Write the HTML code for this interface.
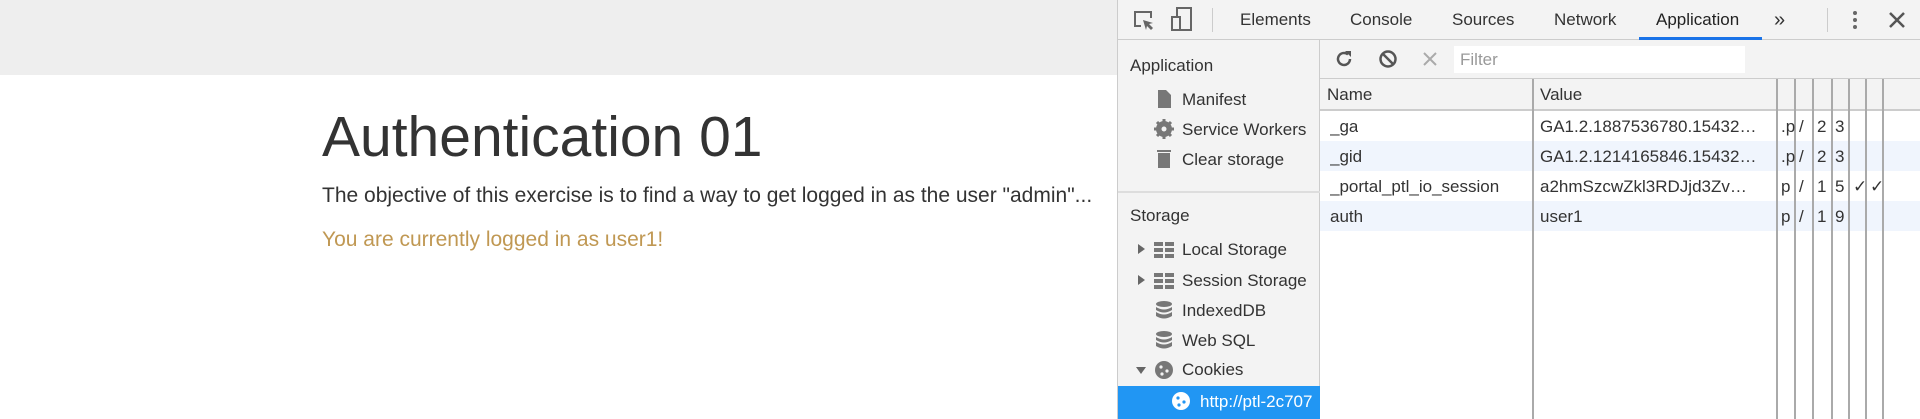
<!DOCTYPE html>
<html><head><style>
*{margin:0;padding:0;box-sizing:border-box}
body{width:1920px;height:419px;overflow:hidden;font-family:"Liberation Sans",sans-serif;background:#fff;position:relative}
.abs{position:absolute;white-space:nowrap}
#topbar{left:0;top:0;width:1117px;height:75px;background:#eeeeee}
h1{position:absolute;left:322px;top:104px;font-size:57px;font-weight:normal;color:#333;line-height:66px}
#dt{left:1117px;top:0;width:803px;height:419px;background:#fff;border-left:1px solid #ccc}
#tabs{left:0;top:0;width:803px;height:40px;background:#f3f3f3;border-bottom:1px solid #ccc;font-size:17px;color:#333}
#side{left:0;top:40px;width:202px;height:379px;background:#f3f3f3;border-right:1px solid #ccc;font-size:17px;color:#333}
.si{position:absolute;left:64px}
.ic{position:absolute;left:36px;width:20px;height:20px}
#tb{left:202px;top:40px;width:601px;height:39px;background:#f3f3f3;border-bottom:1px solid #ccc}
.cell{position:absolute;font-size:17px;color:#333;white-space:nowrap;overflow:hidden}
.vl{position:absolute;top:79px;width:2px;height:340px;background:#aaa}
</style></head><body>
<div class="abs" id="topbar"></div>
<h1>Authentication 01</h1>
<div class="abs" style="left:322px;top:184px;font-size:21px;color:#333">The objective of this exercise is to find a way to get logged in as the user "admin"...</div>
<div class="abs" style="left:322px;top:228px;font-size:21px;color:#c09853">You are currently logged in as user1!</div>

<div class="abs" id="dt">
 <div class="abs" id="tabs">
  <svg class="abs" style="left:14px;top:9px" width="24" height="24" viewBox="0 0 24 24"><path d="M9 17H3V3h16v6" fill="none" stroke="#666" stroke-width="2"/><path d="M11 11l10 3-4 1 4 4-2 2-4-4-1 4z" fill="#666"/></svg>
  <svg class="abs" style="left:52px;top:7px" width="24" height="26" viewBox="0 0 24 26"><rect x="7" y="1" width="14" height="22" fill="none" stroke="#666" stroke-width="2"/><rect x="2" y="10" width="8" height="13" fill="#f3f3f3" stroke="#666" stroke-width="2"/></svg>
  <div class="abs" style="left:94px;top:8px;width:1px;height:24px;background:#ccc"></div>
  <div class="abs" style="left:122px;top:10px">Elements</div>
  <div class="abs" style="left:232px;top:10px">Console</div>
  <div class="abs" style="left:334px;top:10px">Sources</div>
  <div class="abs" style="left:436px;top:10px">Network</div>
  <div class="abs" style="left:538px;top:10px;color:#222">Application</div>
  <div class="abs" style="left:521px;top:37px;width:123px;height:3px;background:#1a73e8"></div>
  <div class="abs" style="left:656px;top:9px;font-size:20px">»</div>
  <div class="abs" style="left:709px;top:8px;width:1px;height:24px;background:#ccc"></div>
  <svg class="abs" style="left:732px;top:9px" width="10" height="22"><circle cx="5" cy="4" r="2" fill="#666"/><circle cx="5" cy="11" r="2" fill="#666"/><circle cx="5" cy="18" r="2" fill="#666"/></svg>
  <svg class="abs" style="left:770px;top:11px" width="18" height="18"><path d="M2 2L16 16M16 2L2 16" stroke="#555" stroke-width="2.5"/></svg>
 </div>
 <div class="abs" id="side">
  <div class="abs" style="left:12px;top:16px">Application</div>
  <svg class="ic" style="top:49px" viewBox="0 0 20 20"><path d="M4 1h8l5 5v13H4z" fill="#777"/></svg><div class="si" style="top:50px">Manifest</div>
  <svg class="ic" style="top:79px" viewBox="0 0 20 20"><circle cx="10" cy="10" r="6" fill="none" stroke="#777" stroke-width="4"/><path d="M10 0v20M0 10h20M3 3l14 14M17 3L3 17" stroke="#777" stroke-width="3"/><circle cx="10" cy="10" r="2.5" fill="#f3f3f3"/></svg><div class="si" style="top:80px">Service Workers</div>
  <svg class="ic" style="top:109px" viewBox="0 0 20 20"><rect x="4" y="4" width="12" height="15" fill="#777"/><rect x="3" y="1" width="14" height="2" fill="#777"/></svg><div class="si" style="top:110px">Clear storage</div>
  <div class="abs" style="left:0;top:151px;width:202px;height:2px;background:#ddd"></div>
  <div class="abs" style="left:12px;top:166px">Storage</div>
  <div class="abs" style="left:20px;top:204px;width:0;height:0;border-left:7px solid #666;border-top:5px solid transparent;border-bottom:5px solid transparent"></div>
  <svg class="ic" style="top:200px" viewBox="0 0 20 20"><path d="M0 2h9v4H0zM11 2h9v4h-9zM0 8h9v4H0zM11 8h9v4h-9zM0 14h9v4H0zM11 14h9v4h-9z" fill="#777"/></svg><div class="si" style="top:200px">Local Storage</div>
  <div class="abs" style="left:20px;top:235px;width:0;height:0;border-left:7px solid #666;border-top:5px solid transparent;border-bottom:5px solid transparent"></div>
  <svg class="ic" style="top:231px" viewBox="0 0 20 20"><path d="M0 2h9v4H0zM11 2h9v4h-9zM0 8h9v4H0zM11 8h9v4h-9zM0 14h9v4H0zM11 14h9v4h-9z" fill="#777"/></svg><div class="si" style="top:231px">Session Storage</div>
  <svg class="ic" style="top:260px" viewBox="0 0 20 20"><ellipse cx="10" cy="4" rx="8" ry="3" fill="#777"/><path d="M2 7q8 5 16 0v3q-8 5-16 0zM2 12q8 5 16 0v4q-8 5-16 0z" fill="#777"/></svg><div class="si" style="top:261px">IndexedDB</div>
  <svg class="ic" style="top:290px" viewBox="0 0 20 20"><ellipse cx="10" cy="4" rx="8" ry="3" fill="#777"/><path d="M2 7q8 5 16 0v3q-8 5-16 0zM2 12q8 5 16 0v4q-8 5-16 0z" fill="#777"/></svg><div class="si" style="top:291px">Web SQL</div>
  <div class="abs" style="left:18px;top:327px;width:0;height:0;border-top:7px solid #666;border-left:5px solid transparent;border-right:5px solid transparent"></div>
  <svg class="ic" style="top:320px" viewBox="0 0 20 20"><circle cx="10" cy="10" r="9" fill="#777"/><circle cx="7" cy="7" r="1.6" fill="#f3f3f3"/><circle cx="13" cy="11" r="1.6" fill="#f3f3f3"/><circle cx="8" cy="14" r="1.6" fill="#f3f3f3"/></svg><div class="si" style="top:320px">Cookies</div>
  <div class="abs" style="left:0;top:346px;width:202px;height:33px;background:#2196f3"></div>
  <svg class="ic" style="left:53px;top:351px" viewBox="0 0 20 20"><circle cx="10" cy="10" r="9" fill="#fff"/><circle cx="7" cy="7" r="1.6" fill="#2196f3"/><circle cx="13" cy="11" r="1.6" fill="#2196f3"/><circle cx="8" cy="14" r="1.6" fill="#2196f3"/></svg>
  <div class="abs" style="left:82px;top:352px;color:#fff">http://ptl-2c707</div>
 </div>
 <div class="abs" id="tb">
  <svg class="abs" style="left:14px;top:9px" width="20" height="20" viewBox="0 0 20 20"><path d="M16 10a6 6 0 1 1-2-4.5" fill="none" stroke="#555" stroke-width="2.5"/><path d="M11 2h6v6z" fill="#555"/></svg>
  <svg class="abs" style="left:58px;top:9px" width="20" height="20" viewBox="0 0 20 20"><circle cx="10" cy="10" r="7.5" fill="none" stroke="#555" stroke-width="2.5"/><path d="M5 5l10 10" stroke="#555" stroke-width="2.5"/></svg>
  <svg class="abs" style="left:102px;top:11px" width="16" height="16"><path d="M2 2L14 14M14 2L2 14" stroke="#aaa" stroke-width="2"/></svg>
  <div class="abs" style="left:134px;top:6px;width:291px;height:27px;background:#fff;color:#999;font-size:17px;padding:4px 6px">Filter</div>
 </div>
 <div class="abs" style="left:202px;top:79px;width:601px;height:32px;background:#f3f3f3;border-bottom:2px solid #ccc"></div>
 <div class="abs" style="left:202px;top:141px;width:601px;height:30px;background:#f0f5fd"></div>
 <div class="abs" style="left:202px;top:201px;width:601px;height:30px;background:#f0f5fd"></div>
 <div class="vl" style="left:414px"></div><div class="vl" style="left:658px"></div>
 <div class="vl" style="left:676px"></div><div class="vl" style="left:694px"></div><div class="vl" style="left:713px"></div>
 <div class="vl" style="left:730px"></div><div class="vl" style="left:747px"></div><div class="vl" style="left:764px"></div>
 <div class="cell" style="left:209px;top:85px">Name</div>
 <div class="cell" style="left:422px;top:85px">Value</div>
 <div class="cell" style="left:212px;top:117px">_ga</div>
 <div class="cell" style="left:422px;top:117px">GA1.2.1887536780.15432…</div>
 <div class="cell" style="left:212px;top:147px">_gid</div>
 <div class="cell" style="left:422px;top:147px">GA1.2.1214165846.15432…</div>
 <div class="cell" style="left:212px;top:177px">_portal_ptl_io_session</div>
 <div class="cell" style="left:422px;top:177px">a2hmSzcwZkl3RDJjd3Zv…</div>
 <div class="cell" style="left:212px;top:207px">auth</div>
 <div class="cell" style="left:422px;top:207px">user1</div>
 <div class="cell" style="left:663px;top:117px">.p</div><div class="cell" style="left:681px;top:117px">/</div><div class="cell" style="left:699px;top:117px">2</div><div class="cell" style="left:717px;top:117px">3</div>
 <div class="cell" style="left:663px;top:147px">.p</div><div class="cell" style="left:681px;top:147px">/</div><div class="cell" style="left:699px;top:147px">2</div><div class="cell" style="left:717px;top:147px">3</div>
 <div class="cell" style="left:663px;top:177px">p</div><div class="cell" style="left:681px;top:177px">/</div><div class="cell" style="left:699px;top:177px">1</div><div class="cell" style="left:717px;top:177px">5</div><div class="cell" style="left:735px;top:177px">✓</div><div class="cell" style="left:752px;top:177px">✓</div>
 <div class="cell" style="left:663px;top:207px">p</div><div class="cell" style="left:681px;top:207px">/</div><div class="cell" style="left:699px;top:207px">1</div><div class="cell" style="left:717px;top:207px">9</div>
</div>
</body></html>
